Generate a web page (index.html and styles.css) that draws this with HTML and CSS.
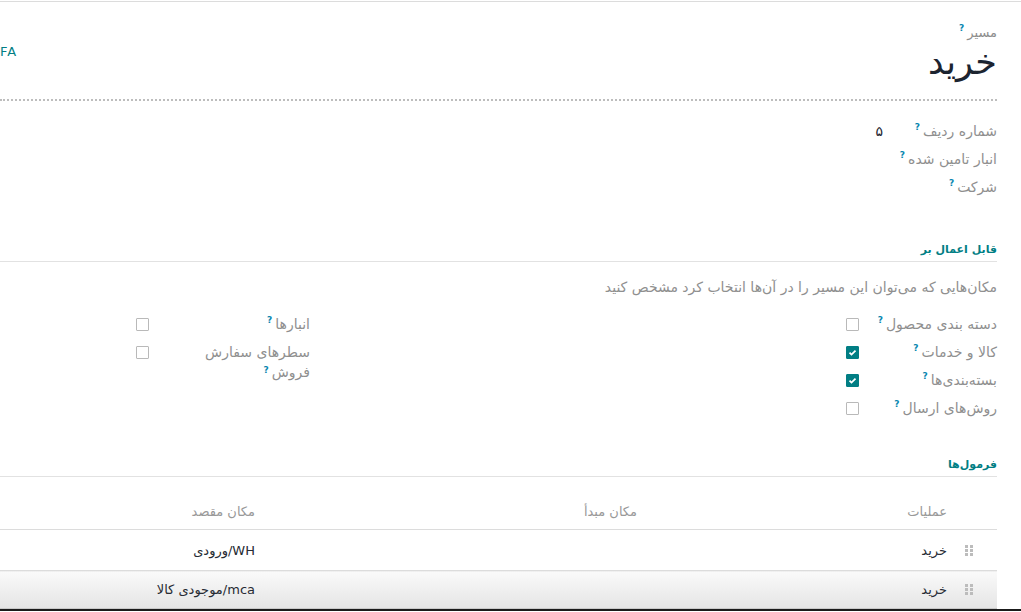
FILE: index.html
```html
<!DOCTYPE html>
<html lang="fa" dir="rtl">
  <head>
    <meta charset="UTF-8" />
    <title>مسیر - خرید</title>
    <link rel="stylesheet" href="styles.css">
  </head>
  <body>
    <div class="sheet">
      <div class="title-block">
        <div class="title-label">مسیر<sup>?</sup></div>
        <div class="title-row">
          <h1 class="title">خرید</h1>
          <span class="lang">FA</span>
        </div>
      </div>

      <div class="group top-group">
        <div class="row">
          <div class="label">شماره ردیف<sup>?</sup></div>
          <div class="value">۵</div>
        </div>
        <div class="row">
          <div class="label">انبار تامین شده<sup>?</sup></div>
          <div class="value"></div>
        </div>
        <div class="row">
          <div class="label">شرکت<sup>?</sup></div>
          <div class="value"></div>
        </div>
      </div>

      <div class="section-title first">قابل اعمال بر</div>
      <p class="desc">مکان‌هایی که می‌توان این مسیر را در آن‌ها انتخاب کرد مشخص کنید</p>

      <div class="columns">
        <div class="group check-group">
          <div class="row">
            <div class="label">دسته بندی محصول<sup>?</sup></div>
            <div class="value"><span class="box"></span></div>
          </div>
          <div class="row">
            <div class="label">کالا و خدمات<sup>?</sup></div>
            <div class="value"><span class="box checked"></span></div>
          </div>
          <div class="row">
            <div class="label">بسته‌بندی‌ها<sup>?</sup></div>
            <div class="value"><span class="box checked"></span></div>
          </div>
          <div class="row">
            <div class="label">روش‌های ارسال<sup>?</sup></div>
            <div class="value"><span class="box"></span></div>
          </div>
        </div>
        <div class="group check-group side">
          <div class="row">
            <div class="label">انبارها<sup>?</sup></div>
            <div class="value"><span class="box"></span></div>
          </div>
          <div class="row">
            <div class="label wrap">سطرهای سفارش فروش<sup>?</sup></div>
            <div class="value"><span class="box"></span></div>
          </div>
        </div>
      </div>

      <div class="section-title">فرمول‌ها</div>
      <table class="rules">
        <tr>
          <th class="handle-col"></th>
          <th class="op-col">عملیات</th>
          <th class="src-col">مکان مبدأ</th>
          <th>مکان مقصد</th>
        </tr>
        <tr>
          <td class="handle-col"><span class="handle"></span></td>
          <td>خرید</td>
          <td></td>
          <td>WH/ورودی</td>
        </tr>
        <tr class="hover">
          <td class="handle-col"><span class="handle"></span></td>
          <td>خرید</td>
          <td></td>
          <td>mca/موجودی کالا</td>
        </tr>
      </table>
    </div>
    <div class="window-edge"></div>
  </body>
</html>
```
FILE: styles.css
```css
html, body {
    margin: 0;
    height: 612px;
    overflow: hidden;
    background: #fff;
}

body {
    font-family: "DejaVu Sans", sans-serif;
    color: #1f2328;
    border-top: 1px solid #dcdcdc;
    margin-top: 1px;
}

.sheet {
    direction: rtl;
    width: 997px;
    margin-right: 24px;
}

sup {
    color: #0a87b0;
    font-size: 9px;
    font-weight: bold;
    line-height: 0;
    margin-right: 3px;
    vertical-align: 6px;
}

.title-block {
    padding-top: 22px;
    padding-bottom: 17px;
    border-bottom: 2px dotted #bdbdbd;
}

.title-label {
    font-size: 13px;
    line-height: 18px;
    color: #8d8d8d;
}

.title-row {
    display: flex;
    justify-content: space-between;
    align-items: flex-start;
}

.title {
    margin: 0;
    font-size: 35px;
    font-weight: normal;
    line-height: 40px;
    color: #1c2430;
}

.lang {
    margin-top: 1px;
    font-size: 13px;
    line-height: 18px;
    color: #017e84;
    letter-spacing: 1px;
}

.group .row {
    display: flex;
    align-items: flex-start;
    min-height: 28px;
}

.label {
    font-size: 14px;
    line-height: 28px;
    color: #8f8f8f;
}

.value {
    font-size: 14px;
    line-height: 28px;
    color: #1c2430;
}

.top-group {
    margin-top: 16px;
}

.top-group .label {
    width: 114px;
}

.section-title {
    margin-top: 33px;
    padding-bottom: 2px;
    border-bottom: 1px solid #e2e2e2;
    font-size: 11px;
    font-weight: bold;
    line-height: 19px;
    color: #017e84;
}

.section-title.first {
    margin-top: 39px;
}

.desc {
    margin: 15px 0 13px;
    font-size: 14px;
    line-height: 20px;
    color: #8f8f8f;
}

.columns {
    display: flex;
}

.check-group {
    width: 687px;
}

.check-group .label {
    width: 138px;
}

.check-group.side {
    width: auto;
    flex: 1;
}

.check-group.side .label {
    width: 161px;
}

.label.wrap {
    box-sizing: border-box;
    padding-left: 45px;
    line-height: 20px;
    padding-top: 4px;
}

.label.wrap sup {
    vertical-align: 4px;
}

.box {
    display: inline-block;
    box-sizing: border-box;
    width: 13px;
    height: 13px;
    margin-top: 8px;
    border: 1px solid #b9b9b9;
    border-radius: 1px;
    vertical-align: top;
}

.box.checked {
    border-color: #017e84;
    background: #017e84 url("data:image/svg+xml,%3Csvg xmlns='http://www.w3.org/2000/svg' width='13' height='13'%3E%3Cpath d='M3.5 6.6l2 2 4-4' fill='none' stroke='white' stroke-width='1.8'/%3E%3C/svg%3E") center / 13px 13px no-repeat;
}

.rules {
    width: 997px;
    margin-top: 17px;
    border-collapse: collapse;
    font-size: 13px;
}

.rules th,
.rules td {
    padding: 0 8px 0 0;
    text-align: right;
    border-bottom: 1px solid #dcdcdc;
}

.rules th {
    height: 35px;
    font-weight: normal;
    color: #999;
}

.rules td {
    height: 40px;
    color: #262b33;
}

.rules .handle-col {
    width: 18px;
    padding-right: 24px;
}

.rules .op-col {
    width: 302px;
}

.rules .src-col {
    width: 374px;
}

.handle {
    display: block;
    width: 8px;
    height: 11px;
    background:
        linear-gradient(#bcbcbc, #bcbcbc) 0 0 / 3px 3px,
        linear-gradient(#bcbcbc, #bcbcbc) 5px 0 / 3px 3px,
        linear-gradient(#bcbcbc, #bcbcbc) 0 4px / 3px 3px,
        linear-gradient(#bcbcbc, #bcbcbc) 5px 4px / 3px 3px,
        linear-gradient(#bcbcbc, #bcbcbc) 0 8px / 3px 3px,
        linear-gradient(#bcbcbc, #bcbcbc) 5px 8px / 3px 3px;
    background-repeat: no-repeat;
}

.rules tr.hover td {
    height: 37px;
    background: linear-gradient(#fafafa, #e4e4e4);
    border-bottom-color: #c8c8c8;
}

.window-edge {
    height: 2px;
    background: #1a1a1a;
}
```
